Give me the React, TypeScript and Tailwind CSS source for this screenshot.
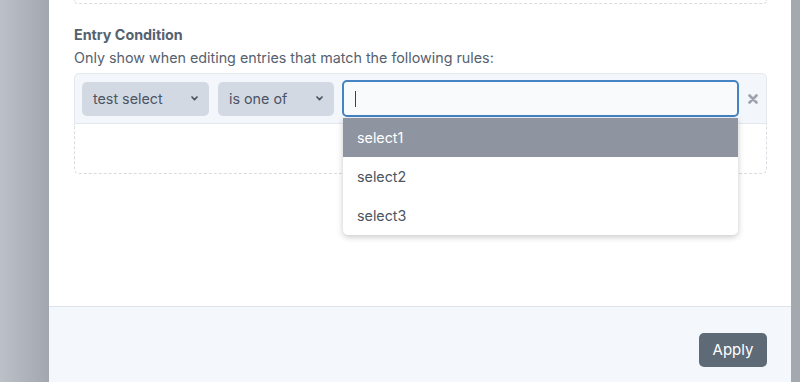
import React from 'react';

const options = ['select1', 'select2', 'select3'];

const Chevron: React.FC = () => (
  <svg width="7" height="5" viewBox="0 0 7 5" className="text-[#4b5563]">
    <path d="M1 1 L3.5 3.6 L6 1" fill="none" stroke="currentColor" strokeWidth="1.7" strokeLinecap="round" strokeLinejoin="round" />
  </svg>
);

const SelectBox: React.FC<{ label: string; width: string }> = ({ label, width }) => (
  <div className={`${width} h-[34px] flex items-center justify-between pl-[11px] pr-[11px] rounded-[5px] bg-[#d3d9e3] text-[14.3px] text-[#4b5563]`}>
    <span>{label}</span>
    <Chevron />
  </div>
);

const App: React.FC = () => {
  return (
    <div className="flex h-[382px] w-[800px] overflow-hidden font-['Inter','Liberation_Sans',Arial,sans-serif]">
      {/* overlay left */}
      <div className="w-[49px] bg-gradient-to-r from-[#bcc1c8] to-[#a2a7af]" />

      {/* Panel */}
      <div className="flex-1 flex flex-col bg-white">
        <div className="flex-1 px-[25px] pr-[24px]">
          {/* previous section tail */}
          <div className="h-[4px] border-x border-b border-dashed border-[#d7dce2] rounded-b-[5px]" />

          <div className="mt-[21px] text-[14.3px] leading-[20px] font-bold text-[#56616f]">Entry Condition</div>
          <div className="mt-[3px] text-[14.3px] leading-[20px] text-[#56616f]">
            Only show when editing entries that match the following rules:
          </div>

          {/* Rules */}
          <div className="mt-[5px]">
            <div className="flex items-center py-[6px] pl-[7px] border border-[#e3e8ef] rounded-t-[5px] bg-[#f3f6fa]">
              <SelectBox label="test select" width="w-[127px]" />
              <div className="w-[9px]" />
              <SelectBox label="is one of" width="w-[116px]" />
              <div className="w-[8px]" />
              <div className="relative flex-1">
                <div className="h-[37px] flex items-center pl-[11px] border-2 border-[#4583c2] rounded-[5px] bg-[#f8fafc]">
                  <span className="w-px h-[16px] bg-[#374151]" />
                </div>
                {/* dropdown */}
                <div className="absolute left-px right-px top-[38px] z-10 bg-white rounded-b-[5px] shadow-[0_2px_6px_rgba(0,0,0,0.22)] overflow-hidden">
                  {options.map((opt, i) => (
                    <div
                      key={opt}
                      className={`h-[39px] flex items-center pl-[14px] pt-px text-[14.3px] ${
                        i === 0 ? 'bg-[#8e95a0] text-white' : 'text-[#4b5563]'
                      }`}
                    >
                      {opt}
                    </div>
                  ))}
                </div>
              </div>
              <div className="w-[27px] flex justify-center">
                <svg width="10" height="10" viewBox="0 0 10 10">
                  <path d="M1.5 1.5 L8.5 8.5 M8.5 1.5 L1.5 8.5" stroke="#9ca3af" strokeWidth="2.6" strokeLinecap="round" />
                </svg>
              </div>
            </div>
            <div className="h-[50px] border-x border-b border-dashed border-[#d7dce2] rounded-b-[5px]" />
          </div>
        </div>

        {/* Footer */}
        <div className="h-[76px] flex justify-end items-start pt-[26px] pr-[24px] border-t border-[#dde3ea] bg-[#f4f7fb]">
          <button className="h-[34px] w-[68px] rounded-[5px] bg-[#5f6a77] text-white text-[15px]">Apply</button>
        </div>
      </div>

      {/* overlay right */}
      <div className="w-[9px] bg-[#a4a9b0]" />
    </div>
  );
};

export default App;
